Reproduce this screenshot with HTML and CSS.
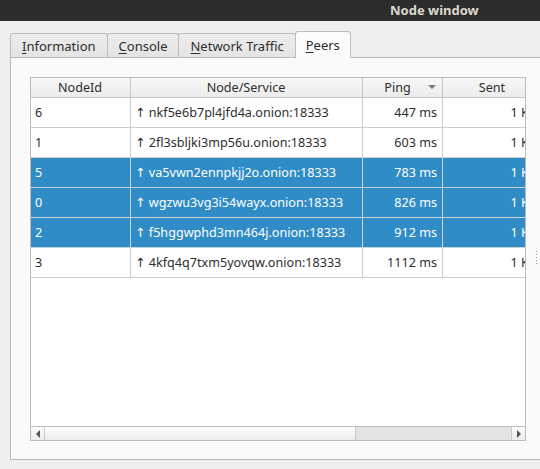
FILE: index.html
```html
<!DOCTYPE html>
<html>
<head>
<meta charset="utf-8">
<link rel="stylesheet" href="styles.css">
</head>
<body>
<div class="window">
  <div class="titlebar"><span class="title">Node window</span></div>
  <div class="tabbar">
    <div class="tab"><u>I</u>nformation</div>
    <div class="tab"><u>C</u>onsole</div>
    <div class="tab"><u>N</u>etwork Traffic</div>
    <div class="tab active"><u>P</u>eers</div>
  </div>
  <div class="pane">
    <div class="view">
      <div class="viewport">
        <div class="grid">
          <div class="row hdr">
            <div class="cell c1">NodeId</div>
            <div class="cell c2">Node/Service</div>
            <div class="cell c3">Ping<span class="sort"></span></div>
            <div class="cell c4">Sent</div>
          </div>
          <div class="row">
            <div class="cell c1">6</div>
            <div class="cell c2">↑ nkf5e6b7pl4jfd4a.onion:18333</div>
            <div class="cell c3">447 ms</div>
            <div class="cell c4">1 KB</div>
          </div>
          <div class="row">
            <div class="cell c1">1</div>
            <div class="cell c2">↑ 2fl3sbljki3mp56u.onion:18333</div>
            <div class="cell c3">603 ms</div>
            <div class="cell c4">1 KB</div>
          </div>
          <div class="row sel">
            <div class="cell c1">5</div>
            <div class="cell c2">↑ va5vwn2ennpkjj2o.onion:18333</div>
            <div class="cell c3">783 ms</div>
            <div class="cell c4">1 KB</div>
          </div>
          <div class="row sel">
            <div class="cell c1">0</div>
            <div class="cell c2">↑ wgzwu3vg3i54wayx.onion:18333</div>
            <div class="cell c3">826 ms</div>
            <div class="cell c4">1 KB</div>
          </div>
          <div class="row sel">
            <div class="cell c1">2</div>
            <div class="cell c2">↑ f5hggwphd3mn464j.onion:18333</div>
            <div class="cell c3">912 ms</div>
            <div class="cell c4">1 KB</div>
          </div>
          <div class="row">
            <div class="cell c1">3</div>
            <div class="cell c2">↑ 4kfq4q7txm5yovqw.onion:18333</div>
            <div class="cell c3">1112 ms</div>
            <div class="cell c4">1 KB</div>
          </div>
        </div>
      </div>
      <div class="hscroll">
        <div class="sbtn left"><span class="tri-l"></span></div>
        <div class="slider"></div>
        <div class="trough"></div>
        <div class="sbtn right"><span class="tri-r"></span></div>
      </div>
    </div>
  </div>
  <div class="grip"><span></span><span></span><span></span><span></span><span></span></div>
</div>
</body>
</html>
```
FILE: styles.css
```css
html, body {
  margin: 0;
  padding: 0;
}
body {
  width: 540px;
  height: 469px;
  overflow: hidden;
  background: #efefef;
  font-family: "Noto Sans", "DejaVu Sans", sans-serif;
  font-size: 13px;
  color: #2e2e2e;
}
.window {
  position: relative;
  width: 540px;
  height: 469px;
}
.titlebar {
  height: 21px;
  background: #2c2c2c;
  color: #dcd8d0;
  font-weight: bold;
  font-size: 13px;
  line-height: 21px;
}
.title {
  padding-left: 390px;
}
.tabbar {
  display: flex;
  align-items: flex-end;
  height: 36px;
  padding-left: 10px;
  position: relative;
  z-index: 1;
}
.tab {
  height: 24px;
  box-sizing: border-box;
  border: 1px solid #bdbdbd;
  border-bottom: none;
  border-radius: 3px 3px 0 0;
  background: linear-gradient(#ececec, #e4e4e4);
  line-height: 25px;
  padding: 0 11px;
  margin-right: -1px;
  color: #2e2e2e;
  white-space: nowrap;
}
.tab u {
  text-decoration-thickness: 1px;
  text-underline-offset: 2px;
}
.tab.active {
  height: 27px;
  margin-bottom: -1px;
  background: #fbfbfb;
  line-height: 27px;
  padding: 0 10px;
}
.pane {
  margin-left: 10px;
  width: 560px;
  height: 403px;
  box-sizing: border-box;
  border: 1px solid #b9b9b9;
  background: #fafafa;
  padding: 19px 0 0 19px;
}
.view {
  width: 496px;
  height: 364px;
  box-sizing: border-box;
  border: 1px solid #bababa;
  display: flex;
  flex-direction: column;
  background: #fff;
}
.viewport {
  flex: 1;
  overflow: hidden;
  background: #fff;
}
.grid {
  width: 512px;
  font-size: 12.6px;
}
.row {
  display: grid;
  grid-template-columns: 100px 232px 80px 100px;
  height: 30px;
}
.cell {
  box-sizing: border-box;
  border-right: 1px solid #cdcdcd;
  border-bottom: 1px solid #cdcdcd;
  padding: 0 5px 0 4px;
  line-height: 29px;
  white-space: nowrap;
  overflow: hidden;
}
.c3, .c4 {
  text-align: right;
}
.row.hdr {
  height: 20px;
}
.hdr .cell {
  background: linear-gradient(#f7f7f7, #ececec);
  border-color: #c6c6c6;
  line-height: 19px;
  text-align: center;
  position: relative;
}
.hdr .c3 {
  padding-right: 14px;
}
.sort {
  position: absolute;
  right: 6px;
  top: 7px;
  width: 0;
  height: 0;
  border-left: 4px solid transparent;
  border-right: 4px solid transparent;
  border-top: 4px solid #7a7a7a;
}
.row.sel .cell {
  background: #308cc6;
  color: #fff;
  border-color: #c9d3da;
}
.hscroll {
  height: 14px;
  box-sizing: border-box;
  border-top: 1px solid #bdbdbd;
  display: flex;
  background: #e3e3e3;
}
.sbtn {
  width: 13px;
  display: flex;
  align-items: center;
  justify-content: center;
  background: linear-gradient(#fbfbfb, #ececec);
}
.sbtn.left {
  border-right: 1px solid #c9c9c9;
}
.sbtn.right {
  border-left: 1px solid #c9c9c9;
}
.tri-l {
  width: 0;
  height: 0;
  border-top: 4px solid transparent;
  border-bottom: 4px solid transparent;
  border-right: 4px solid #555;
}
.tri-r {
  width: 0;
  height: 0;
  border-top: 4px solid transparent;
  border-bottom: 4px solid transparent;
  border-left: 4px solid #555;
}
.slider {
  width: 310px;
  border-right: 1px solid #c6c6c6;
  background: linear-gradient(#fdfdfd, #ececec);
}
.trough {
  flex: 1;
  background: #e3e3e3;
}
.grip {
  position: absolute;
  left: 536px;
  top: 251px;
  display: flex;
  flex-direction: column;
  gap: 2px;
}
.grip span {
  width: 1px;
  height: 1px;
  background: #a0a0a0;
}
```
